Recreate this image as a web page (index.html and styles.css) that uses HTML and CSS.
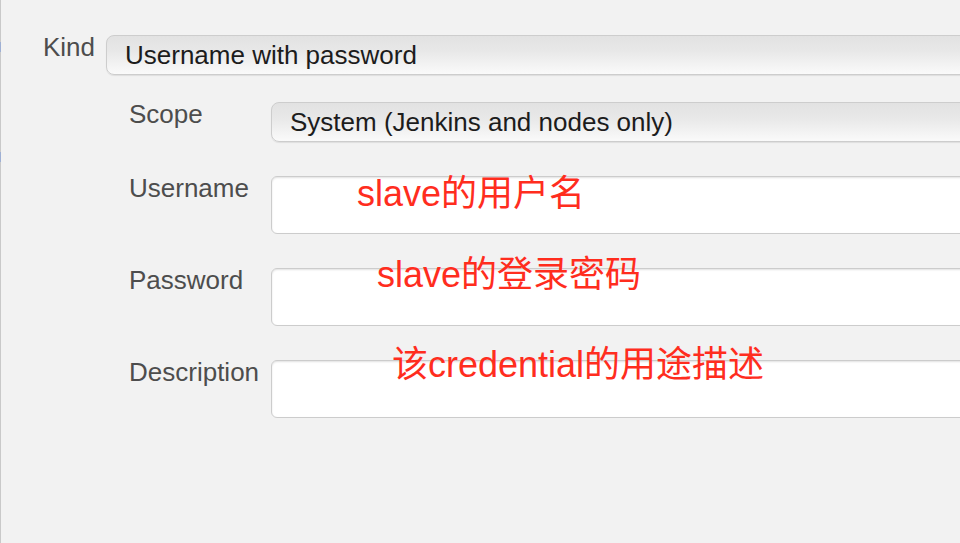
FILE: index.html
```html
<!DOCTYPE html>
<html lang="en">
<head>
    <meta charset="UTF-8">
    <meta name="viewport" content="width=device-width, initial-scale=1.0">
    <title>Credentials</title>
    <link rel="stylesheet" href="styles.css">
</head>
<body>
    <div class="panel">
        <span class="edge-mark edge-mark-top"></span>
        <span class="edge-mark edge-mark-bottom"></span>

        <div class="row kind-row">
            <label class="label kind-label">Kind</label>
            <div class="select">Username with password</div>
        </div>

        <div class="fields">
            <div class="row">
                <label class="label">Scope</label>
                <div class="select">System (Jenkins and nodes only)</div>
            </div>
            <div class="row">
                <label class="label">Username</label>
                <div class="input"></div>
            </div>
            <div class="row">
                <label class="label">Password</label>
                <div class="input"></div>
            </div>
            <div class="row">
                <label class="label">Description</label>
                <div class="input"></div>
            </div>
        </div>

        <!-- annotations drawn over the form -->
        <span class="note note-username">slave的用户名</span>
        <span class="note note-password">slave的登录密码</span>
        <span class="note note-description">该credential的用途描述</span>
    </div>
</body>
</html>
```

FILE: styles.css
```css
html, body {
    margin: 0;
    padding: 0;
    height: 100%;
}
body {
    font-family: "Liberation Sans", Arial, sans-serif;
    background-color: #f2f2f2;
    overflow: hidden;
}
.panel {
    position: relative;
    height: 543px;
    box-sizing: border-box;
    border-left: 1px solid #c9c9c9;
    padding-top: 35px;
}
.edge-mark {
    position: absolute;
    left: -1px;
    width: 1px;
    height: 10px;
    background-color: #9fb0d4;
}
.edge-mark-top {
    top: 42px;
}
.edge-mark-bottom {
    top: 152px;
}
.row {
    display: flex;
    align-items: flex-start;
}
.kind-row {
    padding-left: 42px;
}
.label {
    font-size: 26px;
    line-height: 30px;
    color: #4d4d4d;
    margin-top: -3px;
    flex-shrink: 0;
}
.kind-label {
    width: 63px;
}
.fields {
    padding-left: 128px;
    margin-top: 27px;
}
.fields .label {
    width: 142px;
}
.fields .row + .row {
    margin-top: 34px;
}
.select {
    flex: 1;
    margin-right: -30px;
    height: 40px;
    box-sizing: border-box;
    padding: 0 18px;
    border: 1px solid #cdcdcd;
    border-radius: 8px;
    background: linear-gradient(#e2e2e2, #e8e8e8 40%, #fafafa);
    box-shadow: 0 1px 1px rgba(0, 0, 0, 0.08);
    font-size: 26px;
    line-height: 38px;
    color: #1c1c1c;
    white-space: nowrap;
}
.input {
    flex: 1;
    margin-right: -30px;
    height: 58px;
    box-sizing: border-box;
    border: 1px solid #cccccc;
    border-radius: 6px;
    background-color: #fff;
    box-shadow: inset 0 1px 2px rgba(0, 0, 0, 0.12);
}
.note {
    position: absolute;
    font-family: "Liberation Sans", "Noto Sans CJK SC", sans-serif;
    font-size: 36px;
    line-height: 36px;
    color: #ff2d1e;
    white-space: nowrap;
}
.note-username {
    left: 356px;
    top: 176px;
}
.note-password {
    left: 376px;
    top: 257px;
}
.note-description {
    left: 391px;
    top: 347px;
}
```
